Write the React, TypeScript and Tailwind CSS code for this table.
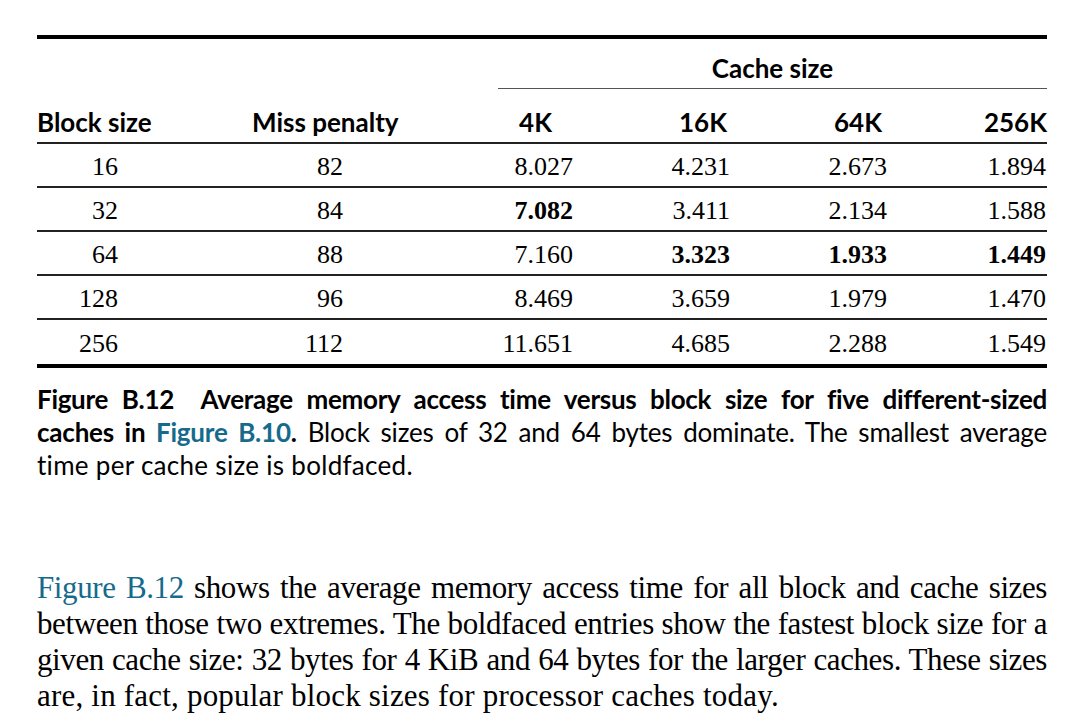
import React from "react";

const rows: { b: string; m: string; v: [string, boolean][] }[] = [
  { b: "16", m: "82", v: [["8.027", false], ["4.231", false], ["2.673", false], ["1.894", false]] },
  { b: "32", m: "84", v: [["7.082", true], ["3.411", false], ["2.134", false], ["1.588", false]] },
  { b: "64", m: "88", v: [["7.160", false], ["3.323", true], ["1.933", true], ["1.449", true]] },
  { b: "128", m: "96", v: [["8.469", false], ["3.659", false], ["1.979", false], ["1.470", false]] },
  { b: "256", m: "112", v: [["11.651", false], ["4.685", false], ["2.288", false], ["1.549", false]] },
];

const sans = "font-['Lato','Open_Sans',sans-serif]";
const serif = "font-['Liberation_Serif','Times_New_Roman',serif]";

const dataPads = ["pr-[2px] w-[77px]", "pr-[1px] w-[156px]", "pr-[1px] w-[157px]", "pr-[1px] w-[159px]"];

export default function App() {
  return (
    <div className="w-[1084px] h-[726px] bg-white text-black overflow-hidden">
      <div className="ml-[37px] w-[1010px] pt-[35px]">
        <div className="h-[4px] bg-black" />
        {/* Cache size header */}
        <div className={`flex h-[50px] ${sans}`}>
          <div className="w-[461px]" />
          <div className="w-[549px] flex items-end justify-center border-b-[1.5px] border-[#555] pb-[4px]">
            <span className="text-[26px] font-bold leading-[32px]">Cache size</span>
          </div>
        </div>
        {/* column headers */}
        <div className={`flex h-[55px] items-end border-b-2 border-[#222] pb-[4px] ${sans} text-[26px] font-bold leading-[32px]`}>
          <div className="w-[160px] text-left">Block size</div>
          <div className="w-[301px] text-left pl-[55px]">Miss penalty</div>
          <div className="w-[77px] text-right pr-[23px]">4K</div>
          <div className="w-[156px] text-right pr-[4px]">16K</div>
          <div className="w-[157px] text-right pr-[6px]">64K</div>
          <div className="w-[159px] text-right">256K</div>
        </div>
        {rows.map((r, i) => (
          <div
            key={r.b}
            className={`flex items-center pt-[3px] ${serif} text-[26px] leading-[30px] ${
              i === rows.length - 1 ? "h-[48px] border-b-4 border-black" : "h-[44px] border-b-2 border-[#222]"
            }`}
          >
            <div className="w-[160px] text-right pr-[79px]">{r.b}</div>
            <div className="w-[301px] text-right pr-[155px]">{r.m}</div>
            {r.v.map(([val, bold], j) => (
              <div key={j} className={`text-right ${dataPads[j]} ${bold ? "font-bold" : ""}`}>
                {val}
              </div>
            ))}
          </div>
        ))}
        {/* caption */}
        <div className={`mt-[15px] ${sans} text-[26px] leading-[33px]`}>
          <div className="text-justify [text-align-last:justify] font-bold tracking-[-0.3px]">
            Figure B.12&nbsp; Average memory access time versus block size for five different-sized
          </div>
          <div className="text-justify [text-align-last:justify] tracking-[-0.2px]">
            <span className="font-bold">caches in </span>
            <span className="font-bold text-[#166a8c]">Figure B.10</span>
            <span className="font-bold">.</span> Block sizes of 32 and 64 bytes dominate. The smallest average
          </div>
          <div className="tracking-[0.3px]">time per cache size is boldfaced.</div>
        </div>
        {/* body paragraph */}
        <div className={`mt-[88px] ${serif} text-[31px] leading-[36px] tracking-[-0.4px]`}>
          <div className="text-justify [text-align-last:justify]">
            <span className="text-[#166a8c]">Figure B.12</span> shows the average memory access time for all block and cache sizes
          </div>
          <div className="text-justify [text-align-last:justify]">
            between those two extremes. The boldfaced entries show the fastest block size for a
          </div>
          <div className="text-justify [text-align-last:justify]">
            given cache size: 32 bytes for 4 KiB and 64 bytes for the larger caches. These sizes
          </div>
          <div className="tracking-[0.2px]">are, in fact, popular block sizes for processor caches today.</div>
        </div>
      </div>
    </div>
  );
}
